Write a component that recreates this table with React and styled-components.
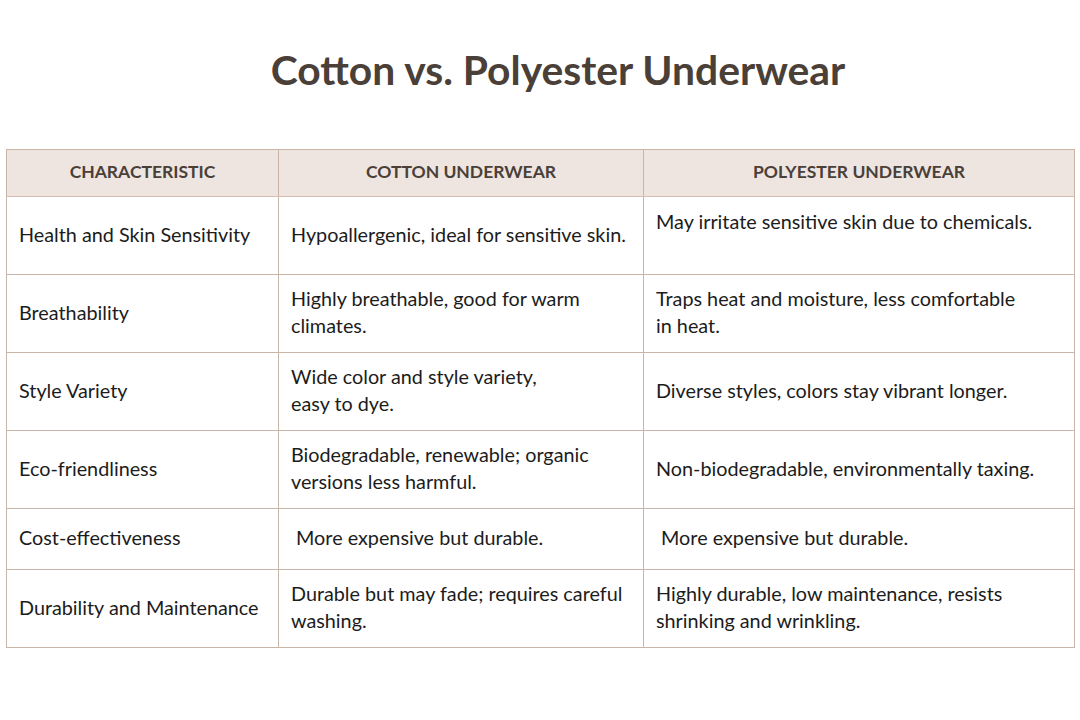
import React from 'react';
import styled, { createGlobalStyle } from 'styled-components';

const GlobalStyle = createGlobalStyle`
  html, body { margin: 0; padding: 0; background: #ffffff; }
  body { font-family: Lato, "Open Sans", sans-serif; }
`;

const Page = styled.div`
  width: 1080px;
  height: 720px;
  box-sizing: border-box;
  padding: 48px 6px 0 6px;
  background: #ffffff;
`;

const Title = styled.h1`
  margin: 0 0 57px 0;
  padding-left: 36px;
  text-align: center;
  font-size: 40.8px;
  line-height: 44px;
  font-weight: 700;
  color: #4a4038;
`;

const Table = styled.table`
  width: 1068px;
  border-collapse: collapse;
  table-layout: fixed;
  border: 1px solid #c9b6a8;
`;

const HeadRow = styled.tr`
  height: 47px;
`;

const HeadCell = styled.th`
  padding: 0 12px 3px 12px;
  background: #eee5e1;
  color: #4a4038;
  font-size: 17.5px;
  font-weight: 700;
  text-transform: uppercase;
  text-align: center;
  border-right: 1px solid #c9b6a8;
  border-bottom: 1px solid #d8bcb3;
`;

const Row = styled.tr`
  height: ${p => p.$h}px;
`;

const Cell = styled.td`
  padding: ${p => (p.$top ? '11px 12px 0 12px' : '0 12px 3px 12px')};
  vertical-align: ${p => (p.$top ? 'top' : 'middle')};
  border-right: 1px solid #c9b6a8;
  border-bottom: 1px solid #c9b6a8;
  color: #1c1c1c;
  font-size: 19.8px;
  line-height: 27px;
  white-space: pre-line;
`;

const rows = [
  { h: 78, name: 'Health and Skin Sensitivity', cotton: 'Hypoallergenic, ideal for sensitive skin.', poly: 'May irritate sensitive skin due to chemicals.', polyTop: true },
  { h: 78, name: 'Breathability', cotton: 'Highly breathable, good for warm\nclimates.', poly: 'Traps heat and moisture, less comfortable\nin heat.' },
  { h: 78, name: 'Style Variety', cotton: 'Wide color and style variety,\neasy to dye.', poly: 'Diverse styles, colors stay vibrant longer.' },
  { h: 78, name: 'Eco-friendliness', cotton: 'Biodegradable, renewable; organic\nversions less harmful.', poly: 'Non-biodegradable, environmentally taxing.' },
  { h: 61, name: 'Cost-effectiveness', cotton: '\u00a0More expensive but durable.', poly: '\u00a0More expensive but durable.' },
  { h: 78, name: 'Durability and Maintenance', cotton: 'Durable but may fade; requires careful\nwashing.', poly: 'Highly durable, low maintenance, resists\nshrinking and wrinkling.' },
];

export default function App() {
  return (
    <>
      <GlobalStyle />
      <Page>
        <Title>Cotton vs. Polyester Underwear</Title>
        <Table>
          <colgroup>
            <col style={{ width: 272 }} />
            <col style={{ width: 365 }} />
            <col style={{ width: 431 }} />
          </colgroup>
          <thead>
            <HeadRow>
              <HeadCell>Characteristic</HeadCell>
              <HeadCell>Cotton Underwear</HeadCell>
              <HeadCell>Polyester Underwear</HeadCell>
            </HeadRow>
          </thead>
          <tbody>
            {rows.map(r => (
              <Row key={r.name} $h={r.h}>
                <Cell>{r.name}</Cell>
                <Cell>{r.cotton}</Cell>
                <Cell $top={r.polyTop}>{r.poly}</Cell>
              </Row>
            ))}
          </tbody>
        </Table>
      </Page>
    </>
  );
}
